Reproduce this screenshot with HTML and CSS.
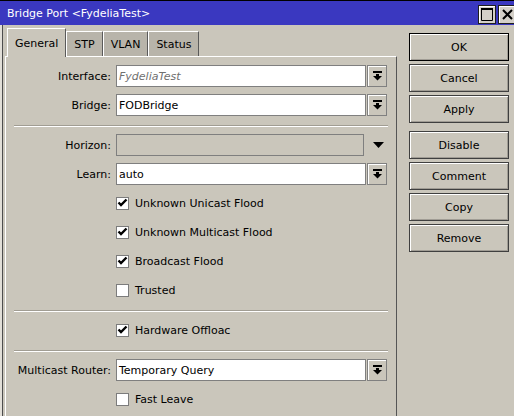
FILE: index.html
```html
<!DOCTYPE html>
<html lang="en">
<head>
  <meta charset="UTF-8">
  <meta name="viewport" content="width=device-width, initial-scale=1.0">
  <title>Bridge Port</title>
  <link rel="stylesheet" href="styles.css">
</head>
<body>
  <div class="window">
    <!-- Title bar -->
    <div class="titlebar">
      <span class="title">Bridge Port &lt;FydeliaTest&gt;</span>
      <div class="title-controls">
        <span class="ctl">
          <svg width="12" height="13" viewBox="0 0 12 13"><path d="M0.5 1.5h11v11h-11z" fill="none" stroke="#000"/><rect x="0" y="0" width="12" height="2"/></svg>
        </span>
        <span class="ctl">
          <svg width="11" height="11" viewBox="0 0 11 11"><path d="M1 1l9 9M10 1l-9 9" stroke="#000" stroke-width="2"/></svg>
        </span>
      </div>
    </div>

    <div class="content">
      <div class="main">
        <!-- Tabs -->
        <div class="tabs">
          <div class="tab active">General</div>
          <div class="tab">STP</div>
          <div class="tab">VLAN</div>
          <div class="tab">Status</div>
        </div>

        <!-- General tab -->
        <div class="panel">
          <div class="row">
            <span class="label">Interface:</span>
            <span class="input readonly">FydeliaTest</span>
            <span class="drop"><svg width="9" height="10" viewBox="0 0 9 10"><rect width="9" height="2"/><rect x="3" y="3" width="3" height="2"/><path d="M0 5h9l-4.5 4.5z"/></svg></span>
          </div>
          <div class="row">
            <span class="label">Bridge:</span>
            <span class="input">FODBridge</span>
            <span class="drop"><svg width="9" height="10" viewBox="0 0 9 10"><rect width="9" height="2"/><rect x="3" y="3" width="3" height="2"/><path d="M0 5h9l-4.5 4.5z"/></svg></span>
          </div>

          <div class="sep"></div>

          <div class="row">
            <span class="label">Horizon:</span>
            <span class="input disabled"></span>
            <span class="arrow"><svg width="11" height="6" viewBox="0 0 11 6"><path d="M0 0h11l-5.5 6z"/></svg></span>
          </div>
          <div class="row">
            <span class="label">Learn:</span>
            <span class="input">auto</span>
            <span class="drop"><svg width="9" height="10" viewBox="0 0 9 10"><rect width="9" height="2"/><rect x="3" y="3" width="3" height="2"/><path d="M0 5h9l-4.5 4.5z"/></svg></span>
          </div>
          <div class="row check-row">
            <span class="box checked"><svg width="11" height="11" viewBox="0 0 11 11"><path d="M1.5 4.5L4 7l5.5-5.5" fill="none" stroke="#000" stroke-width="2.4"/></svg></span>
            <span>Unknown Unicast Flood</span>
          </div>
          <div class="row check-row">
            <span class="box checked"><svg width="11" height="11" viewBox="0 0 11 11"><path d="M1.5 4.5L4 7l5.5-5.5" fill="none" stroke="#000" stroke-width="2.4"/></svg></span>
            <span>Unknown Multicast Flood</span>
          </div>
          <div class="row check-row">
            <span class="box checked"><svg width="11" height="11" viewBox="0 0 11 11"><path d="M1.5 4.5L4 7l5.5-5.5" fill="none" stroke="#000" stroke-width="2.4"/></svg></span>
            <span>Broadcast Flood</span>
          </div>
          <div class="row check-row">
            <span class="box"></span>
            <span>Trusted</span>
          </div>

          <div class="sep"></div>

          <div class="row check-row">
            <span class="box checked"><svg width="11" height="11" viewBox="0 0 11 11"><path d="M1.5 4.5L4 7l5.5-5.5" fill="none" stroke="#000" stroke-width="2.4"/></svg></span>
            <span>Hardware Offloac</span>
          </div>

          <div class="sep"></div>

          <div class="row">
            <span class="label">Multicast Router:</span>
            <span class="input">Temporary Query</span>
            <span class="drop"><svg width="9" height="10" viewBox="0 0 9 10"><rect width="9" height="2"/><rect x="3" y="3" width="3" height="2"/><path d="M0 5h9l-4.5 4.5z"/></svg></span>
          </div>
          <div class="row check-row">
            <span class="box"></span>
            <span>Fast Leave</span>
          </div>
        </div>
      </div>

      <!-- Dialog buttons -->
      <div class="actions">
        <div class="btn default">OK</div>
        <div class="btn">Cancel</div>
        <div class="btn">Apply</div>
        <div class="btn spaced">Disable</div>
        <div class="btn">Comment</div>
        <div class="btn">Copy</div>
        <div class="btn">Remove</div>
      </div>
    </div>
  </div>
</body>
</html>
```

FILE: styles.css
```css
/* Reset */
* {
  margin: 0;
  padding: 0;
  box-sizing: border-box;
}

body {
  font-family: "DejaVu Sans", "Liberation Sans", sans-serif;
  font-size: 11px;
  color: #000;
  background: #cac6bb;
  width: 514px;
  height: 416px;
  overflow: hidden;
}

.window {
  width: 516px;
}

/* Title bar */
.titlebar {
  height: 25px;
  background: #3a38c0;
  border-top: 1px solid #000;
  display: flex;
  justify-content: space-between;
  align-items: center;
  padding-left: 7px;
  color: #fff;
}

.title-controls {
  display: flex;
  gap: 2px;
  align-self: flex-end;
  margin-bottom: 1px;
}

.ctl {
  width: 18px;
  height: 19px;
  background: #d4d0c8;
  border: 1px solid #1e1e1e;
  box-shadow: inset 1px 1px #fff;
  display: flex;
  align-items: center;
  justify-content: center;
}

/* Body */
.content {
  display: flex;
  border-left: 2px solid #e2dfd8;
}

.main {
  border-left: 1px solid #4d4d4d;
  padding-left: 2px;
  padding-top: 3px;
}

.tabs {
  display: flex;
  align-items: flex-end;
  height: 28px;
  padding-left: 2px;
  position: relative;
  z-index: 1;
}

.tab {
  height: 25px;
  padding: 0 7px;
  border: 1px solid;
  border-color: #fff #5a5a5a transparent #fff;
  border-bottom: none;
  background: #b8b4aa;
  display: flex;
  align-items: center;
}

.tab.active {
  height: 29px;
  margin-bottom: -1px;
  background: #cac6bb;
}

.panel {
  width: 392px;
  border-top: 1px solid #fff;
  border-left: 1px solid #fff;
  border-right: 1px solid #555;
  padding: 8px 0 20px;
  display: flex;
  flex-direction: column;
  gap: 7px;
}

.row {
  display: flex;
  align-items: center;
  height: 22px;
}

.label {
  width: 105px;
  text-align: right;
  margin-right: 5px;
}

.input {
  width: 250px;
  height: 22px;
  background: #fff;
  border: 1px solid #7f7f7f;
  padding-left: 2px;
  display: flex;
  align-items: center;
}

.input.readonly {
  font-style: italic;
  color: #707070;
}

.input.disabled {
  width: 248px;
  background: transparent;
}

.drop {
  width: 20px;
  height: 22px;
  margin-left: 1px;
  border: 1px solid #808080;
  box-shadow: inset 1px 1px #fff;
  display: flex;
  align-items: center;
  justify-content: center;
}

.arrow {
  width: 24px;
  margin-left: 2px;
  display: flex;
  justify-content: center;
}

.check-row {
  padding-left: 110px;
  gap: 6px;
}

.box {
  width: 13px;
  height: 13px;
  background: #fff;
  border: 1px solid #7c7c7c;
  display: flex;
}

.sep {
  height: 2px;
  margin: 2px 8px 0;
  border-top: 1px solid #a19d93;
  border-bottom: 1px solid #fff;
}

/* Dialog buttons */
.actions {
  width: 100px;
  margin-left: 12px;
  padding-top: 8px;
  display: flex;
  flex-direction: column;
  gap: 3px;
}

.btn {
  height: 28px;
  border: 1px solid #3f3f3f;
  box-shadow: inset 1px 1px #fff, inset -1px -1px #a09c94;
  display: flex;
  align-items: center;
  justify-content: center;
}

.btn.default {
  border-color: #000;
}

.btn.spaced {
  margin-top: 5px;
}
```
